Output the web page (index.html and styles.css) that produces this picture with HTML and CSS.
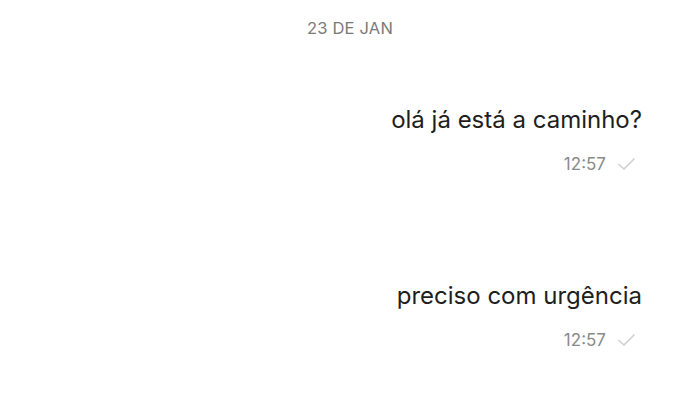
FILE: index.html
```html
<!DOCTYPE html>
<html lang="pt">
<head>
  <meta charset="UTF-8" />
  <meta name="viewport" content="width=device-width, initial-scale=1.0"/>
  <title>Conversa</title>
  <link rel="stylesheet" href="styles.css">
</head>
<body>

  <div class="chat">
    <div class="day">23 DE JAN</div>

    <div class="msg">
      <div class="text">olá já está a caminho?</div>
      <div class="meta">
        <span class="time">12:57</span>
        <svg class="tick" width="20" height="14" viewBox="0 0 20 14">
          <path d="M2 7.5 L7 12 L17 2" fill="none" stroke="#cfcfcf" stroke-width="1.6" stroke-linecap="round" stroke-linejoin="round"/>
        </svg>
      </div>
    </div>

    <div class="msg">
      <div class="text">preciso com urgência</div>
      <div class="meta">
        <span class="time">12:57</span>
        <svg class="tick" width="20" height="14" viewBox="0 0 20 14">
          <path d="M2 7.5 L7 12 L17 2" fill="none" stroke="#cfcfcf" stroke-width="1.6" stroke-linecap="round" stroke-linejoin="round"/>
        </svg>
      </div>
    </div>
  </div>

</body>
</html>
```

FILE: styles.css
```css
body {
  margin: 0;
  background: #fff;
  font-family: Inter, "Noto Sans", sans-serif;
}
.chat {
  display: flex;
  flex-direction: column;
  padding: 18px 58px 0 0;
}
.day {
  align-self: center;
  margin-left: 58px;
  font-size: 16.5px;
  color: #7a7a7a;
  letter-spacing: 0.2px;
}
.msg {
  display: flex;
  flex-direction: column;
  align-items: flex-end;
  margin-top: 67px;
}
.msg + .msg {
  margin-top: 107px;
}
.text {
  font-size: 24px;
  color: #1e1e1e;
}
.meta {
  display: flex;
  align-items: center;
  gap: 11px;
  margin-top: 20px;
  margin-right: 5px;
}
.time {
  font-size: 17px;
  color: #8a8a8a;
}
```
